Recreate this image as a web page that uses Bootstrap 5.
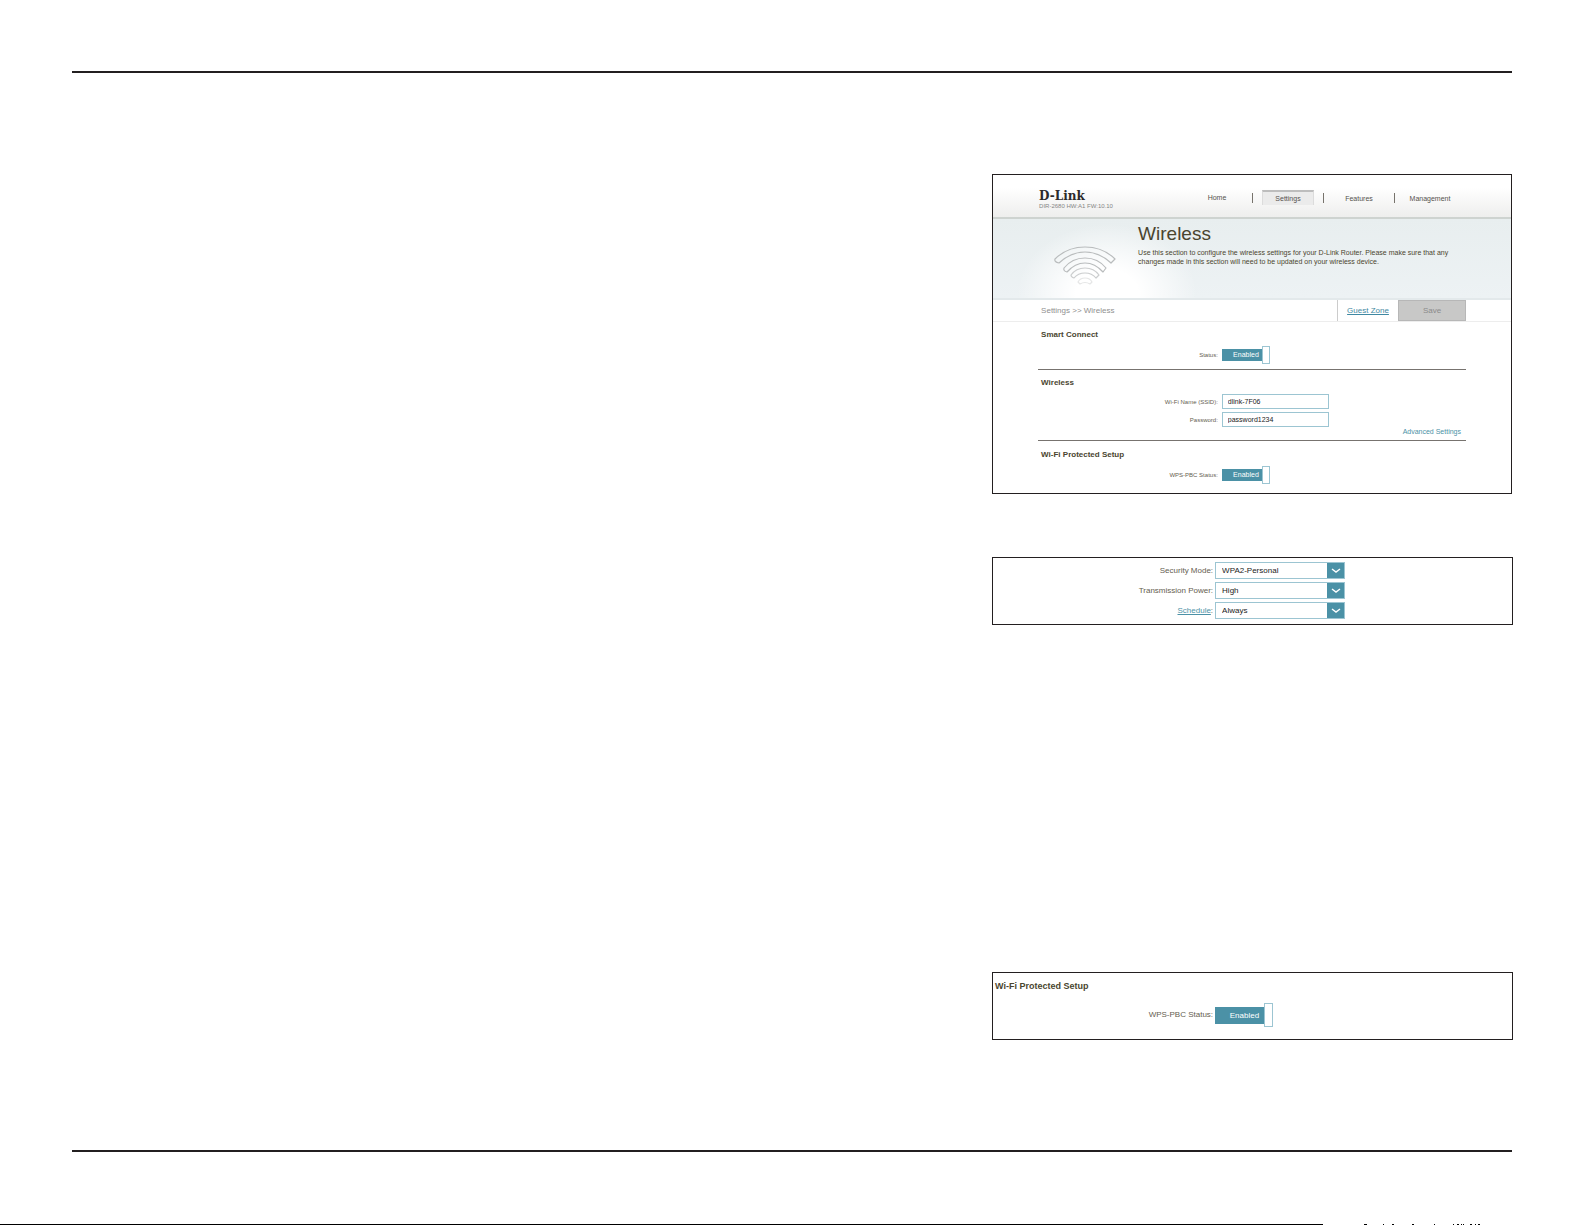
<!DOCTYPE html>
<html lang="en">
<head>
<meta charset="utf-8">
<meta name="viewport" content="width=device-width, initial-scale=1">
<title>D-Link Wireless Settings</title>
<link href="https://cdn.jsdelivr.net/npm/bootstrap@5.3.0/dist/css/bootstrap.min.css" rel="stylesheet">
<style>
:root { --teal: #4b91a6; --edge: #9cc5d2; --olive: #4a452f; }
body { font-family: "Liberation Sans", Arial, sans-serif; color: #65604f; background: #fff; font-size: 8px; line-height: 10px; }
.sheet { padding: 71px 72px 0; }
.sheet-rule { height: 2px; background: #231f20; margin-right: 1px; }
.figures { width: 36.15%; padding-top: 101px; padding-bottom: 110px; }
.panel { border: 1px solid #231f20; background: #fff; }
.router { margin-right: 1px; min-height: 320px; margin-bottom: 63px; }
.advanced { min-height: 68px; margin-bottom: 347px; padding-top: 4px; }
.wps { min-height: 68px; padding-top: 8px; }
.inset { padding-left: 45px; padding-right: 45px; }

/* header */
.masthead { height: 44px; background: linear-gradient(#fff 30%, #eeeeed); border-bottom: 2px solid #ced3d0; }
.brand-block { padding: 15px 0 0 1px; }
.brand-mark { font: bold 12px/12px "DejaVu Serif", serif; color: #2c2a2b; }
.firmware { font-size: 6px; line-height: 8px; color: #858585; }
.main-nav { font-size: 7px; line-height: 15px; padding-top: 14px; margin-right: 10px; }
.main-nav a { color: #55524d; text-decoration: none; width: 52px; height: 15px; text-align: center; border-top: 1px solid transparent; }
.main-nav a.active { background: #ebebeb; border: 1px solid #dcdcdc; border-top: 2px solid #bdbdbd; border-bottom: 0; line-height: 13px; }
.main-nav li + li { border-left: 1px solid #77736c; height: 10px; margin-left: 9px; padding-left: 9px; }
.main-nav li + li a { margin-top: -3px; }

/* banner */
.banner { height: 81px; background: radial-gradient(ellipse 90px 70px at 22% 95%, #fff 35%, rgba(255,255,255,0)), linear-gradient(#e8eeef, #edf2f4); border-bottom: 2px solid #e3e9eb; }
.wifi-art { width: 62px; height: 40px; margin-left: 16px; margin-top: 26px; }
.banner-copy { margin-left: 22px; padding-top: 4px; color: var(--olive); font-size: 7px; line-height: 9px; }
.banner-copy h1 { font-size: 19px; line-height: 22px; margin-bottom: 3px; font-weight: 400; }

/* crumbs */
.crumbs { height: 22px; border-bottom: 1px solid #ededed; color: #8f8f8f; }
.crumb-path { padding-left: 3px; }
.guest-tab { width: 61px; border-left: 1px solid #ccc; color: #3f88a2; line-height: 22px; }
.save-btn { width: 68px; padding: 0; border: 1px solid #b7b7b7; border-radius: 0; background: #c8c8c7; color: #8b8b8b; font-size: 8px; line-height: 18px; }

/* form */
.block-title { font-size: 8px; line-height: 10px; font-weight: 700; color: var(--olive); margin: 0; padding-left: 3px; }
.section-line { border-bottom: 1px solid #77736f; }
.s-smart { padding-top: 8px; height: 48px; }
.s-wireless { padding-top: 8px; height: 71px; }
.s-wps { padding-top: 9px; }
.s-smart .block-title, .s-wps .block-title, .s-wireless .block-title { margin-bottom: 6px; }
.field-name { width: 42%; text-align: right; font-size: 6px; }
.field-row { gap: 4px; }
.field-stack { gap: 3px; }
.text-field { width: 107px; height: 15px; border: 1px solid var(--edge); border-radius: 0; padding: 0 5px; font-size: 7px; line-height: 13px; color: #222; }
.more-link { color: var(--teal); font-size: 7px; line-height: 10px; text-decoration: none; padding-right: 5px; }
.sched-link { color: var(--teal); }
.switch-on { background: var(--teal); color: #fff; font-size: 7px; width: 40px; height: 12px; line-height: 12px; padding-right: 3px; text-align: right; }
.switch-knob { width: 8px; height: 18px; border: 1px solid var(--edge); background: #fff; }
.wide .field-name { width: 220px; font-size: 8px; }
.wide .field-row { gap: 2px; }
.wide .switch-on { font-size: 8px; width: 49px; height: 17px; line-height: 17px; padding-right: 5px; }
.wide .switch-knob { width: 9px; height: 24px; }
.wide .block-title { font-size: 9px; padding-left: 2px; margin-bottom: 12px; }
.pick { width: 130px; height: 17px; border: 1px solid var(--edge); border-radius: 0; padding: 0 20px 0 6px; font-size: 8px; line-height: 15px; color: #222;
  background: #fff url("data:image/svg+xml,%3Csvg xmlns='http://www.w3.org/2000/svg' viewBox='0 0 18 17'%3E%3Cpath fill='%234b91a6' d='M0 0h18v17H0z'/%3E%3Cpath fill='none' stroke='%23fff' stroke-width='1.4' d='M5 7l4 3 4-3'/%3E%3C/svg%3E") right center / 18px 17px no-repeat border-box; background-origin: border-box; }
.picks { gap: 3px; }
.page-edge { height: 1px; }
</style>
</head>
<body>
<div class="min-vh-100 d-flex flex-column">
  <main class="sheet">
    <div class="sheet-rule"></div>
    <div class="figures ms-auto">

      <section class="panel router">
        <header class="masthead inset d-flex justify-content-between">
          <div class="brand-block text-nowrap">
            <div class="brand-mark">D-Link</div>
            <div class="firmware">DIR-2680 HW:A1 FW:10.10</div>
          </div>
          <nav class="main-nav" aria-label="Main">
            <ul class="list-unstyled d-flex m-0">
              <li><a class="d-block" href="#">Home</a></li>
              <li class="mt-1"><a class="d-block active" href="#">Settings</a></li>
              <li class="mt-1"><a class="d-block" href="#">Features</a></li>
              <li class="mt-1"><a class="d-block" href="#">Management</a></li>
            </ul>
          </nav>
        </header>
        <div class="banner inset d-flex">
          <svg class="wifi-art flex-shrink-0" viewBox="0 0 62 40" fill="none" stroke="#b9bcbd" stroke-width="1.2" stroke-linejoin="round" aria-hidden="true">
            <path d="M1 14Q13 2 31 2T61 14L57 18Q45 7 31 7T5 18Q0 17 1 14Z"/>
            <path d="M10 23Q18 13 31 13T52 23L49 27Q41 18 31 18T13 27Q9 26 10 23Z"/>
            <path stroke="#cbcdce" d="M17 30Q22 23 31 23T45 30L42 33Q38 28 31 28T20 33Q17 32 17 30Z"/>
            <path stroke="#e5e6e6" d="M24 37Q26 33 31 33T38 37L36 39Q31 36 26 39Z"/>
          </svg>
          <div class="banner-copy">
            <h1>Wireless</h1>
            <div class="text-nowrap">Use this section to configure the wireless settings for your D-Link Router. Please make sure that any<br>changes made in this section will need to be updated on your wireless device.</div>
          </div>
        </div>
        <div class="crumbs inset d-flex">
          <div class="crumb-path flex-grow-1 align-self-center">Settings &gt;&gt; Wireless</div>
          <a class="guest-tab text-center" href="#">Guest Zone</a>
          <button class="save-btn btn" type="button">Save</button>
        </div>
        <form class="inset">
          <div class="s-smart section-line">
            <h2 class="block-title">Smart Connect</h2>
            <div class="field-row d-flex align-items-center">
              <label class="field-name" for="smart">Status:</label>
              <div><input class="btn-check" type="checkbox" id="smart" checked>
              <label class="d-flex align-items-center" for="smart"><span class="switch-on">Enabled</span><span class="switch-knob"></span></label></div>
            </div>
          </div>
          <div class="s-wireless section-line">
            <h2 class="block-title">Wireless</h2>
            <div class="field-stack d-flex flex-column">
              <div class="field-row d-flex align-items-center">
                <label class="field-name" for="ssid">Wi-Fi Name (SSID):</label>
                <input class="text-field" id="ssid" type="text" value="dlink-7F06">
              </div>
              <div class="field-row d-flex align-items-center">
                <label class="field-name" for="pass">Password:</label>
                <input class="text-field" id="pass" type="text" value="password1234">
              </div>
            </div>
            <div class="d-flex justify-content-end"><a class="more-link" href="#">Advanced Settings</a></div>
          </div>
          <div class="s-wps">
            <h2 class="block-title">Wi-Fi Protected Setup</h2>
            <div class="field-row d-flex align-items-center">
              <label class="field-name" for="pbc">WPS-PBC Status:</label>
              <div><input class="btn-check" type="checkbox" id="pbc" checked>
              <label class="d-flex align-items-center" for="pbc"><span class="switch-on">Enabled</span><span class="switch-knob"></span></label></div>
            </div>
          </div>
        </form>
      </section>

      <form class="panel advanced wide">
        <div class="picks d-flex flex-column">
          <div class="field-row d-flex align-items-center">
            <label class="field-name" for="mode">Security Mode:</label>
            <select class="pick form-select" id="mode"><option>WPA2-Personal</option></select>
          </div>
          <div class="field-row d-flex align-items-center">
            <label class="field-name" for="power">Transmission Power:</label>
            <select class="pick form-select" id="power"><option>High</option></select>
          </div>
          <div class="field-row d-flex align-items-center">
            <label class="field-name" for="sched"><a class="sched-link" href="#">Schedule</a>:</label>
            <select class="pick form-select" id="sched"><option>Always</option></select>
          </div>
        </div>
      </form>

      <form class="panel wps wide">
        <h2 class="block-title">Wi-Fi Protected Setup</h2>
        <div class="field-row d-flex align-items-center">
          <label class="field-name" for="pbc2">WPS-PBC Status:</label>
          <div><input class="btn-check" type="checkbox" id="pbc2" checked>
          <label class="d-flex align-items-center" for="pbc2"><span class="switch-on">Enabled</span><span class="switch-knob"></span></label></div>
        </div>
      </form>
    </div>
    <div class="sheet-rule"></div>
  </main>
  <svg class="page-edge w-100 mt-auto" viewBox="0 0 1585 1" preserveAspectRatio="none" shape-rendering="crispEdges" aria-hidden="true">
    <path d="M0 0h1323v1H0zM1364 0h3v1h-3zM1383 0h1v1h-1zM1392 0h2v1h-2zM1412 0h2v1h-2zM1434 0h1v1h-1zM1453 0h1v1h-1zM1457 0h2v1h-2zM1461 0h1v1h-1zM1463 0h1v1h-1zM1470 0h2v1h-2zM1475 0h1v1h-1zM1478 0h2v1h-2z"/>
  </svg>
</div>
<script src="https://cdn.jsdelivr.net/npm/bootstrap@5.3.0/dist/js/bootstrap.bundle.min.js"></script>
</body>
</html>
